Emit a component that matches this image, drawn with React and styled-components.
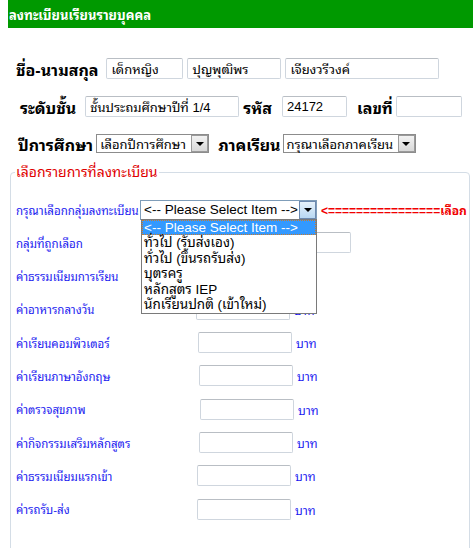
import React from "react";
import styled, { createGlobalStyle } from "styled-components";

const thai = `"Liberation Sans", "Noto Sans Thai Looped", "Noto Sans Thai", "Noto Sans", sans-serif`;

const GlobalStyle = createGlobalStyle`
  body {
    margin: 0 0 0 8px;
    background: #fff;
    font-family: ${thai};
  }
`;

const fees = [
  { label: "ค่าธรรมเนียมการเรียน", shift: 0 },
  { label: "ค่าอาหารกลางวัน", shift: 0 },
  { label: "ค่าเรียนคอมพิวเตอร์", shift: 2 },
  { label: "ค่าเรียนภาษาอังกฤษ", shift: 3 },
  { label: "ค่าตรวจสุขภาพ", shift: 4 },
  { label: "ค่ากิจกรรมเสริมหลักสูตร", shift: 3 },
  { label: "ค่าธรรมเนียมแรกเข้า", shift: 1 },
  { label: "ค่ารถรับ-ส่ง", shift: 1 },
];

const groups = [
  "<-- Please Select Item -->",
  "ทั่วไป (รับส่งเอง)",
  "ทั่วไป (ขึ้นรถรับส่ง)",
  "บุตรครู",
  "หลักสูตร IEP",
  "นักเรียนปกติ (เข้าใหม่)",
];

const Page = styled.div`
  width: 465px;
`;

const TitleBar = styled.div`
  height: 28px;
  background: #009900;
  color: #fff;
  font-size: 13px;
  font-weight: bold;
  display: flex;
  align-items: center;
  padding-left: 1px;
`;

const Info = styled.div`
  padding-top: 30px;
  display: flex;
  flex-direction: column;
  gap: 17px;
`;

const InfoRow = styled.div`
  display: flex;
  align-items: center;
  height: ${(p) => p.h || 21}px;
  padding-left: ${(p) => p.pad}px;
`;

const BoldLabel = styled.span`
  font-size: 16px;
  font-weight: bold;
  color: #000;
  margin-right: ${(p) => p.gap || 0}px;
`;

const TextBox = styled.div`
  box-sizing: border-box;
  width: ${(p) => p.w}px;
  height: ${(p) => p.h || 21}px;
  margin-right: ${(p) => p.gap || 0}px;
  border: 1px solid #cfd6de;
  border-top-color: #b9bec4;
  border-radius: 2px;
  font-size: 13px;
  color: #000;
  display: flex;
  align-items: center;
  padding-left: 4px;
  white-space: nowrap;
  overflow: hidden;
  background: #fff;
`;

const SelectBox = styled.div`
  position: relative;
  box-sizing: border-box;
  width: ${(p) => p.w}px;
  height: ${(p) => p.h || 19}px;
  margin-right: ${(p) => p.gap || 0}px;
  border: 1px solid ${(p) => (p.open ? "#7f9db9" : "#8c8c8c")};
  display: flex;
  align-items: center;
  font-size: ${(p) => p.fs || 13}px;
  background: #fff;
`;

const SelectText = styled.span`
  flex: 1;
  padding-left: 3px;
  white-space: nowrap;
  overflow: hidden;
`;

const Arrow = styled.span`
  box-sizing: border-box;
  width: 17px;
  height: 100%;
  border: 1px solid ${(p) => (p.open ? "#6d8ab0" : "#9a9a9a")};
  background: ${(p) =>
    p.open
      ? "linear-gradient(#e6f2fb, #b8d8f3)"
      : "linear-gradient(#f2f2f2, #d8d8d8)"};
  display: flex;
  align-items: center;
  justify-content: center;
  &::after {
    content: "";
    border-left: 4px solid transparent;
    border-right: 4px solid transparent;
    border-top: 4px solid #000;
  }
`;

const Fieldset = styled.fieldset`
  margin: 12px 3px 0 2px;
  padding: 8px 0 20px 5px;
  border: 1px solid #d4dde6;
  border-radius: 4px;
  min-height: 380px;
`;

const Legend = styled.legend`
  color: #e00000;
  font-size: 14px;
  padding: 0 1px;
  margin-left: -1px;
  line-height: 14px;
`;

const Grid = styled.div`
  display: flex;
  flex-direction: column;
  gap: 12.3px;
  margin-top: 12px;
`;

const Line = styled.div`
  display: flex;
  align-items: center;
  height: 21px;
`;

const BlueLabel = styled.span`
  color: #1c1cf0;
  font-size: 11.5px;
  width: ${(p) => p.w || 180}px;
  flex-shrink: 0;
  white-space: nowrap;
`;

const Unit = styled.span`
  color: #1c1cf0;
  font-size: 12px;
  margin-left: 4px;
`;

const Pointer = styled.span`
  color: #f00000;
  font-size: 12px;
  font-weight: bold;
  margin-left: 4px;
  white-space: nowrap;
`;

const DropList = styled.ul`
  position: absolute;
  top: 100%;
  left: 0;
  z-index: 5;
  box-sizing: border-box;
  width: 176px;
  margin: 0;
  padding: 0;
  list-style: none;
  border: 1px solid #7a7a7a;
  background: #fff;
  font-size: 13.5px;
`;

const Option = styled.li`
  height: 15.5px;
  line-height: 15px;
  padding-left: 2px;
  white-space: nowrap;
  color: ${(p) => (p.active ? "#fff" : "#000")};
  background: ${(p) => (p.active ? "#3399ff" : "transparent")};
  outline: ${(p) => (p.active ? "1px dotted #c97a2b" : "none")};
  outline-offset: -1px;
`;

export default function App() {
  return (
    <Page>
      <GlobalStyle />
      <TitleBar>ลงทะเบียนเรียนรายบุคคล</TitleBar>

      <Info>
        <InfoRow pad={8}>
          <BoldLabel gap={8}>ชื่อ-นามสกุล</BoldLabel>
          <TextBox w={77} gap={4}>เด็กหญิง</TextBox>
          <TextBox w={94} gap={4}>ปุญพุฒิพร</TextBox>
          <TextBox w={154}>เจียงวรีวงค์</TextBox>
        </InfoRow>
        <InfoRow pad={12}>
          <BoldLabel gap={9}>ระดับชั้น</BoldLabel>
          <TextBox w={154} gap={4}>ชั้นประถมศึกษาปีที่ 1/4</TextBox>
          <BoldLabel gap={10}>รหัส</BoldLabel>
          <TextBox w={65} gap={10}>24172</TextBox>
          <BoldLabel gap={3}>เลขที่</BoldLabel>
          <TextBox w={66} />
        </InfoRow>
        <InfoRow pad={10} h={19}>
          <BoldLabel gap={3}>ปีการศึกษา</BoldLabel>
          <SelectBox w={113} gap={9}>
            <SelectText>เลือกปีการศึกษา</SelectText>
            <Arrow />
          </SelectBox>
          <BoldLabel gap={2}>ภาคเรียน</BoldLabel>
          <SelectBox w={133}>
            <SelectText>กรุณาเลือกภาคเรียน</SelectText>
            <Arrow />
          </SelectBox>
        </InfoRow>
      </Info>

      <Fieldset>
        <Legend>เลือกรายการที่ลงทะเบียน</Legend>
        <Grid>
          <Line>
            <BlueLabel w={124}>กรุณาเลือกกลุ่มลงทะเบียน</BlueLabel>
            <SelectBox w={177} h={20} fs={13.5} open>
              <SelectText>{groups[0]}</SelectText>
              <Arrow open />
              <DropList>
                {groups.map((g, i) => (
                  <Option key={g} active={i === 0}>
                    {g}
                  </Option>
                ))}
              </DropList>
            </SelectBox>
            <Pointer>&lt;================เลือก</Pointer>
          </Line>
          <Line>
            <BlueLabel>กลุ่มที่ถูกเลือก</BlueLabel>
            <TextBox w={155} />
          </Line>
          {fees.map((f) => (
            <Line key={f.label}>
              <BlueLabel w={180 + f.shift}>{f.label}</BlueLabel>
              <TextBox w={94} />
              <Unit>บาท</Unit>
            </Line>
          ))}
        </Grid>
      </Fieldset>
    </Page>
  );
}
